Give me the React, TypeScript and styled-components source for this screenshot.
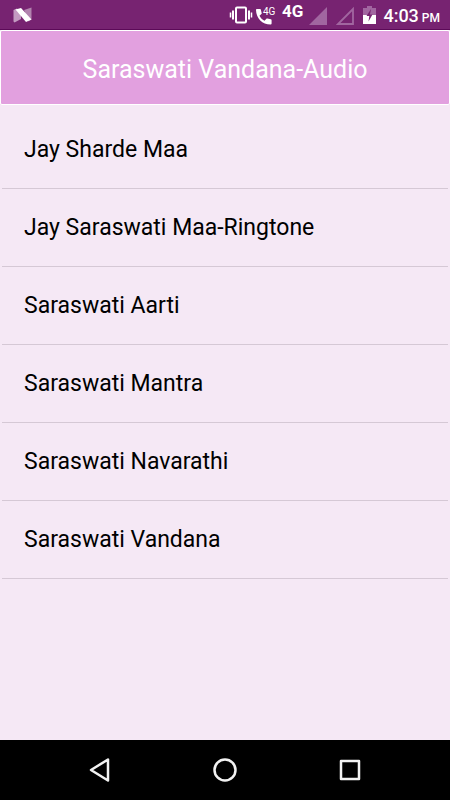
import React from "react";
import styled, { createGlobalStyle } from "styled-components";

const GlobalStyle = createGlobalStyle`
  * { box-sizing: border-box; }
  body { margin: 0; background: #f5e8f5; font-family: Roboto, "Liberation Sans", sans-serif; }
`;

const Screen = styled.div`
  display: flex;
  flex-direction: column;
  min-height: 100vh;
  background: #f5e8f5;
`;

const StatusBar = styled.header`
  display: flex;
  align-items: flex-start;
  justify-content: space-between;
  height: 30px;
  padding: 0 10px 0 12px;
  background: #772371;
  border-bottom: 1px solid #5c0a58;
  color: #fff;
`;

const StatusIcons = styled.div`
  display: flex;
  align-items: flex-start;
`;

const Glyph = styled.svg`
  display: block;
  flex: none;
`;

const SignalGroup = styled.div`
  display: flex;
  gap: 9px;
`;

const NetworkLabel = styled.span`
  margin: 0 6px;
  font-size: 17px;
  line-height: 23px;
  font-weight: 700;
`;

const Clock = styled.time`
  margin-left: 7px;
  font-size: 18px;
  line-height: 32px;
  font-weight: 500;
  white-space: nowrap;
`;

const Meridiem = styled.span`
  margin-left: 3px;
  font-size: 12px;
`;

const TitleBar = styled.div`
  display: flex;
  align-items: center;
  justify-content: center;
  height: 75px;
  padding-top: 5px;
  border: 1px solid #fff;
  border-radius: 2px;
  background: #e2a0df;
`;

const Title = styled.h1`
  margin: 0;
  color: #fff;
  font-size: 25px;
  line-height: 32px;
  font-weight: 400;
`;

const Tracks = styled.ul`
  flex: 1;
  margin: 0;
  padding: 6px 2px 0;
  list-style: none;
`;

const TrackItem = styled.li`
  border-bottom: 1px solid #d5c8d5;
`;

const TrackButton = styled.button`
  display: block;
  width: 100%;
  padding: 24px 22px 23px;
  border: 0;
  background: transparent;
  color: #000;
  font-family: inherit;
  font-size: 23px;
  line-height: 30px;
  text-align: left;
  cursor: pointer;
`;

const NavBar = styled.nav`
  display: flex;
  justify-content: center;
  align-items: center;
  gap: 77px;
  height: 60px;
  background: #000;
`;

const NavButton = styled.button`
  display: flex;
  align-items: center;
  justify-content: center;
  width: 48px;
  height: 48px;
  padding: 0;
  border: 0;
  background: transparent;
  color: #f2f2f2;
`;

const tracks = [
  "Jay Sharde Maa",
  "Jay Saraswati Maa-Ringtone",
  "Saraswati Aarti",
  "Saraswati Mantra",
  "Saraswati Navarathi",
  "Saraswati Vandana",
];

const NougatIcon = () => (
  <Glyph width="22" height="29" viewBox="0 0 22 29" aria-hidden="true">
    <path d="M1.500 10 5 8.500 9 13v6l-6.500 3.500-1-1z" fill="#c39bc1" />
    <path d="M12 10 19.500 7.500v12l-3 2z" fill="#b183ae" />
    <path d="M3.500 9.500 9 8l10.500 11.500-5.500 2.500z" fill="#fff" />
  </Glyph>
);

const VibrateIcon = () => (
  <Glyph width="24" height="29" viewBox="0 0 24 29" fill="none" stroke="#fff" aria-hidden="true">
    <rect x="7" y="7.500" width="10" height="15" rx="1" strokeWidth="2" />
    <path d="M4 10.500v9M20 10.500v9" strokeWidth="2" />
    <path d="M1.500 12.500v5M22.500 12.500v5" strokeWidth="1.500" />
  </Glyph>
);

const CallIcon = () => (
  <Glyph width="23" height="29" viewBox="0 0 23 29" aria-hidden="true">
    <path
      d="M4 9h3c.5 0 .8.300.9.800l.8 3.400c.1.400 0 .7-.3.900l-1.900 1.700c1.100 2.300 2.800 3.900 5 4.900l1.900-1.900c.3-.3.600-.4 1-.3l3.400.8c.5.100.8.500.8.900v3.400c0 .6-.4.900-1 .9C9.300 24.500 3.200 18.500 3 10c0-.6.400-1 1-1z"
      fill="#fff"
    />
    <text x="10" y="15" fill="#fff" fontFamily="Roboto, sans-serif" fontSize="10">4G</text>
  </Glyph>
);

const SignalIcon = () => (
  <Glyph width="18" height="29" viewBox="0 0 18 29" aria-hidden="true">
    <path d="M18 7v18H0z" fill="#a166a0" />
  </Glyph>
);

const EmptySignalIcon = () => (
  <Glyph width="18" height="29" viewBox="0 0 18 29" aria-hidden="true">
    <path d="M17 9v15H2z" fill="none" stroke="#a166a0" strokeWidth="1.800" />
  </Glyph>
);

const BatteryIcon = () => (
  <Glyph width="13" height="29" viewBox="0 0 13 29" aria-hidden="true">
    <path d="M4 6h5v2h4v7H0V8h4z" fill="#a166a0" />
    <path d="M0 15h13v9H0z" fill="#fff" />
    <path d="M8 9 3.500 16h2.800L5.500 21.500 9.500 14.500H7z" fill="#772371" />
  </Glyph>
);

export default function App() {
  return (
    <>
      <GlobalStyle />
      <Screen>
        <StatusBar>
          <NougatIcon />
          <StatusIcons>
            <VibrateIcon />
            <CallIcon />
            <NetworkLabel>4G</NetworkLabel>
            <SignalGroup>
              <SignalIcon />
              <EmptySignalIcon />
              <BatteryIcon />
            </SignalGroup>
            <Clock>
              4:03<Meridiem>PM</Meridiem>
            </Clock>
          </StatusIcons>
        </StatusBar>
        <TitleBar>
          <Title>Saraswati Vandana-Audio</Title>
        </TitleBar>
        <Tracks>
          {tracks.map((track) => (
            <TrackItem key={track}>
              <TrackButton type="button">{track}</TrackButton>
            </TrackItem>
          ))}
        </Tracks>
        <NavBar>
          <NavButton type="button" aria-label="Back">
            <Glyph width="24" height="24" viewBox="0 0 24 24" fill="none" stroke="currentColor" strokeWidth="2.500" strokeLinejoin="round">
              <path d="M20 1.500v21L3 12z" />
            </Glyph>
          </NavButton>
          <NavButton type="button" aria-label="Home">
            <Glyph width="24" height="24" viewBox="0 0 24 24" fill="none" stroke="currentColor" strokeWidth="2.500">
              <circle cx="12" cy="12" r="10.500" />
            </Glyph>
          </NavButton>
          <NavButton type="button" aria-label="Recent apps">
            <Glyph width="24" height="24" viewBox="0 0 24 24" fill="none" stroke="currentColor" strokeWidth="2.500" strokeLinejoin="round">
              <rect x="3" y="3" width="18" height="18" />
            </Glyph>
          </NavButton>
        </NavBar>
      </Screen>
    </>
  );
}
